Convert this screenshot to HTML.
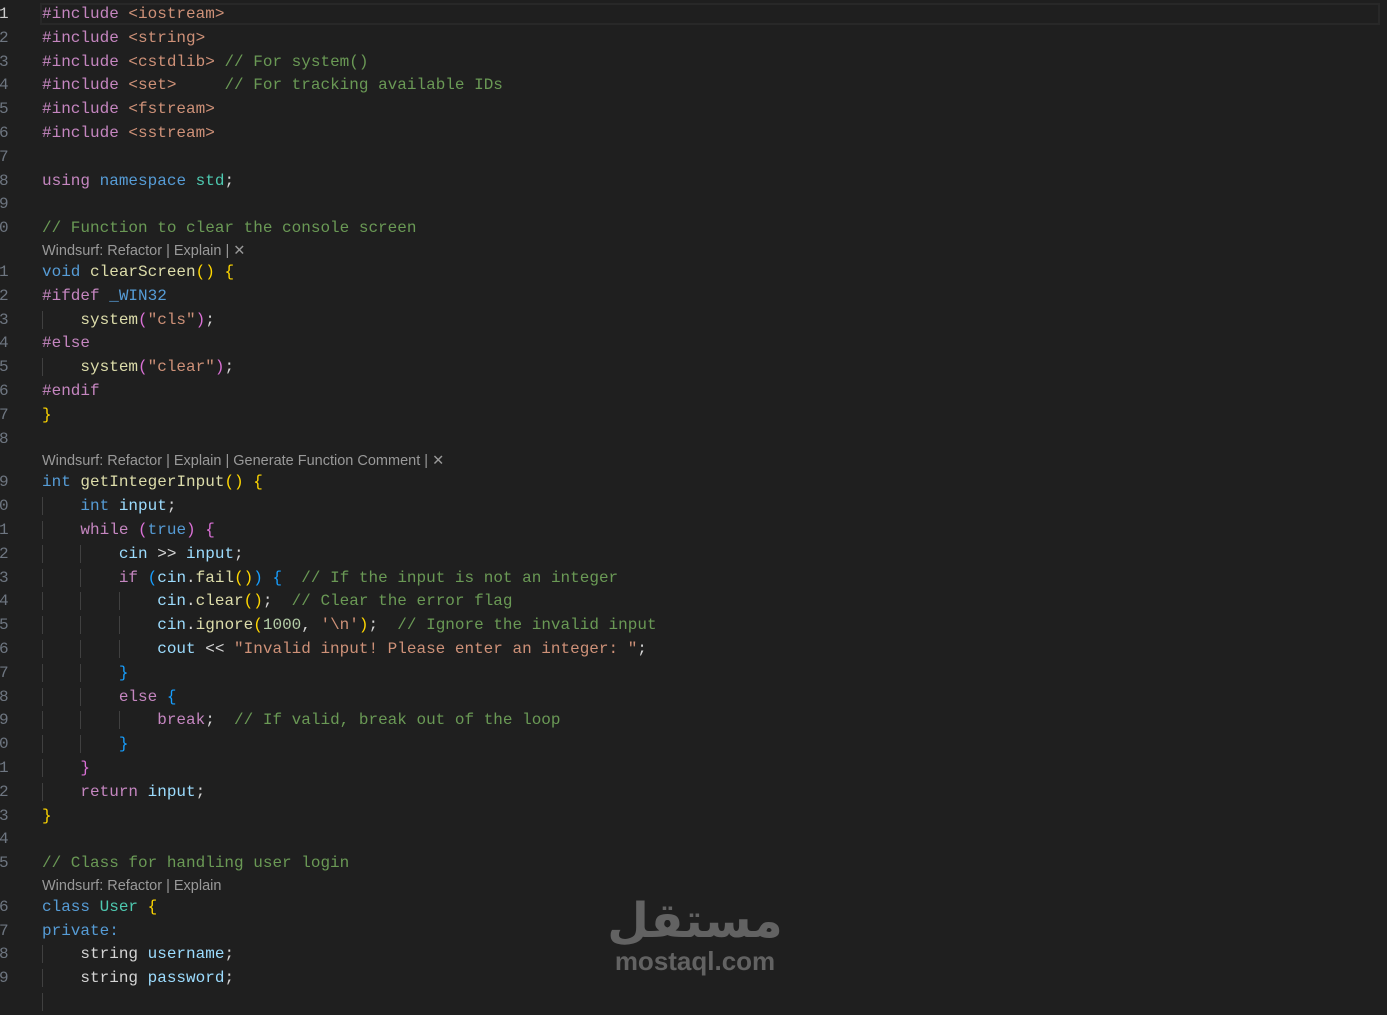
<!DOCTYPE html>
<html><head><meta charset="utf-8"><style>
html,body{margin:0;padding:0;background:#1f1f1f;width:1387px;height:995px;overflow:hidden}
#ed{position:absolute;left:0;top:3px;width:1387px}
.l{position:relative;height:23.8px;line-height:23.8px;font-family:"Liberation Mono",monospace;font-size:16px;color:#d4d4d4;white-space:pre;padding-left:42px}
.n{position:absolute;left:-1px;top:0;color:#6e7681}
.cl{height:20px;line-height:20px;font-family:"Liberation Sans",sans-serif;font-size:14.5px;color:#999;padding-left:42px;white-space:pre;letter-spacing:0px}
.g{box-shadow:inset 1px 0 0 #404040}
.p{color:#C586C0}.s{color:#CE9178}.c{color:#6A9955}.k{color:#569CD6}.f{color:#DCDCAA}.v{color:#9CDCFE}.t{color:#4EC9B0}.num{color:#B5CEA8}
.b1{color:#FFD700}.b2{color:#DA70D6}.b3{color:#179FFF}
#cur{position:absolute;left:40px;top:3px;width:1340px;height:22px;border:2px solid #282828;box-sizing:border-box}
#wm{position:absolute;left:600px;top:896px;width:190px;text-align:center;color:#626262;font-family:"Liberation Sans","DejaVu Sans",sans-serif;font-weight:bold}
</style></head><body>
<div id="cur"></div>
<div id="ed">
<div class="l"><span class="n" style="color:#ccc">1</span><span class="p">#include</span> <span class="s">&lt;iostream&gt;</span></div>
<div class="l"><span class="n">2</span><span class="p">#include</span> <span class="s">&lt;string&gt;</span></div>
<div class="l"><span class="n">3</span><span class="p">#include</span> <span class="s">&lt;cstdlib&gt;</span> <span class="c">// For system()</span></div>
<div class="l"><span class="n">4</span><span class="p">#include</span> <span class="s">&lt;set&gt;</span>     <span class="c">// For tracking available IDs</span></div>
<div class="l"><span class="n">5</span><span class="p">#include</span> <span class="s">&lt;fstream&gt;</span></div>
<div class="l"><span class="n">6</span><span class="p">#include</span> <span class="s">&lt;sstream&gt;</span></div>
<div class="l"><span class="n">7</span></div>
<div class="l"><span class="n">8</span><span class="p">using</span> <span class="k">namespace</span> <span class="t">std</span>;</div>
<div class="l"><span class="n">9</span></div>
<div class="l"><span class="n">0</span><span class="c">// Function to clear the console screen</span></div>
<div class="cl">Windsurf: Refactor | Explain | ✕</div>
<div class="l"><span class="n">1</span><span class="k">void</span> <span class="f">clearScreen</span><span class="b1">()</span> <span class="b1">{</span></div>
<div class="l"><span class="n">2</span><span class="p">#ifdef</span> <span class="k">_WIN32</span></div>
<div class="l"><span class="n">3</span><span class="g">    </span><span class="f">system</span><span class="b2">(</span><span class="s">"cls"</span><span class="b2">)</span>;</div>
<div class="l"><span class="n">4</span><span class="p">#else</span></div>
<div class="l"><span class="n">5</span><span class="g">    </span><span class="f">system</span><span class="b2">(</span><span class="s">"clear"</span><span class="b2">)</span>;</div>
<div class="l"><span class="n">6</span><span class="p">#endif</span></div>
<div class="l"><span class="n">7</span><span class="b1">}</span></div>
<div class="l"><span class="n">8</span></div>
<div class="cl">Windsurf: Refactor | Explain | Generate Function Comment | ✕</div>
<div class="l"><span class="n">9</span><span class="k">int</span> <span class="f">getIntegerInput</span><span class="b1">()</span> <span class="b1">{</span></div>
<div class="l"><span class="n">0</span><span class="g">    </span><span class="k">int</span> <span class="v">input</span>;</div>
<div class="l"><span class="n">1</span><span class="g">    </span><span class="p">while</span> <span class="b2">(</span><span class="k">true</span><span class="b2">)</span> <span class="b2">{</span></div>
<div class="l"><span class="n">2</span><span class="g">    </span><span class="g">    </span><span class="v">cin</span> &gt;&gt; <span class="v">input</span>;</div>
<div class="l"><span class="n">3</span><span class="g">    </span><span class="g">    </span><span class="p">if</span> <span class="b3">(</span><span class="v">cin</span>.<span class="f">fail</span><span class="b1">()</span><span class="b3">)</span> <span class="b3">{</span>  <span class="c">// If the input is not an integer</span></div>
<div class="l"><span class="n">4</span><span class="g">    </span><span class="g">    </span><span class="g">    </span><span class="v">cin</span>.<span class="f">clear</span><span class="b1">()</span>;  <span class="c">// Clear the error flag</span></div>
<div class="l"><span class="n">5</span><span class="g">    </span><span class="g">    </span><span class="g">    </span><span class="v">cin</span>.<span class="f">ignore</span><span class="b1">(</span><span class="num">1000</span>, <span class="s">'\n'</span><span class="b1">)</span>;  <span class="c">// Ignore the invalid input</span></div>
<div class="l"><span class="n">6</span><span class="g">    </span><span class="g">    </span><span class="g">    </span><span class="v">cout</span> &lt;&lt; <span class="s">"Invalid input! Please enter an integer: "</span>;</div>
<div class="l"><span class="n">7</span><span class="g">    </span><span class="g">    </span><span class="b3">}</span></div>
<div class="l"><span class="n">8</span><span class="g">    </span><span class="g">    </span><span class="p">else</span> <span class="b3">{</span></div>
<div class="l"><span class="n">9</span><span class="g">    </span><span class="g">    </span><span class="g">    </span><span class="p">break</span>;  <span class="c">// If valid, break out of the loop</span></div>
<div class="l"><span class="n">0</span><span class="g">    </span><span class="g">    </span><span class="b3">}</span></div>
<div class="l"><span class="n">1</span><span class="g">    </span><span class="b2">}</span></div>
<div class="l"><span class="n">2</span><span class="g">    </span><span class="p">return</span> <span class="v">input</span>;</div>
<div class="l"><span class="n">3</span><span class="b1">}</span></div>
<div class="l"><span class="n">4</span></div>
<div class="l"><span class="n">5</span><span class="c">// Class for handling user login</span></div>
<div class="cl">Windsurf: Refactor | Explain</div>
<div class="l"><span class="n">6</span><span class="k">class</span> <span class="t">User</span> <span class="b1">{</span></div>
<div class="l"><span class="n">7</span><span class="k">private:</span></div>
<div class="l"><span class="n">8</span><span class="g">    </span>string <span class="v">username</span>;</div>
<div class="l"><span class="n">9</span><span class="g">    </span>string <span class="v">password</span>;</div>
<div class="l"><span class="g">    </span></div>
</div>
<div id="wm"><div style="font-size:48px;line-height:50px;font-family:'DejaVu Sans',sans-serif">مستقل</div><div style="font-size:26px;line-height:30px;margin-top:0px">mostaql.com</div></div>
</body></html>
